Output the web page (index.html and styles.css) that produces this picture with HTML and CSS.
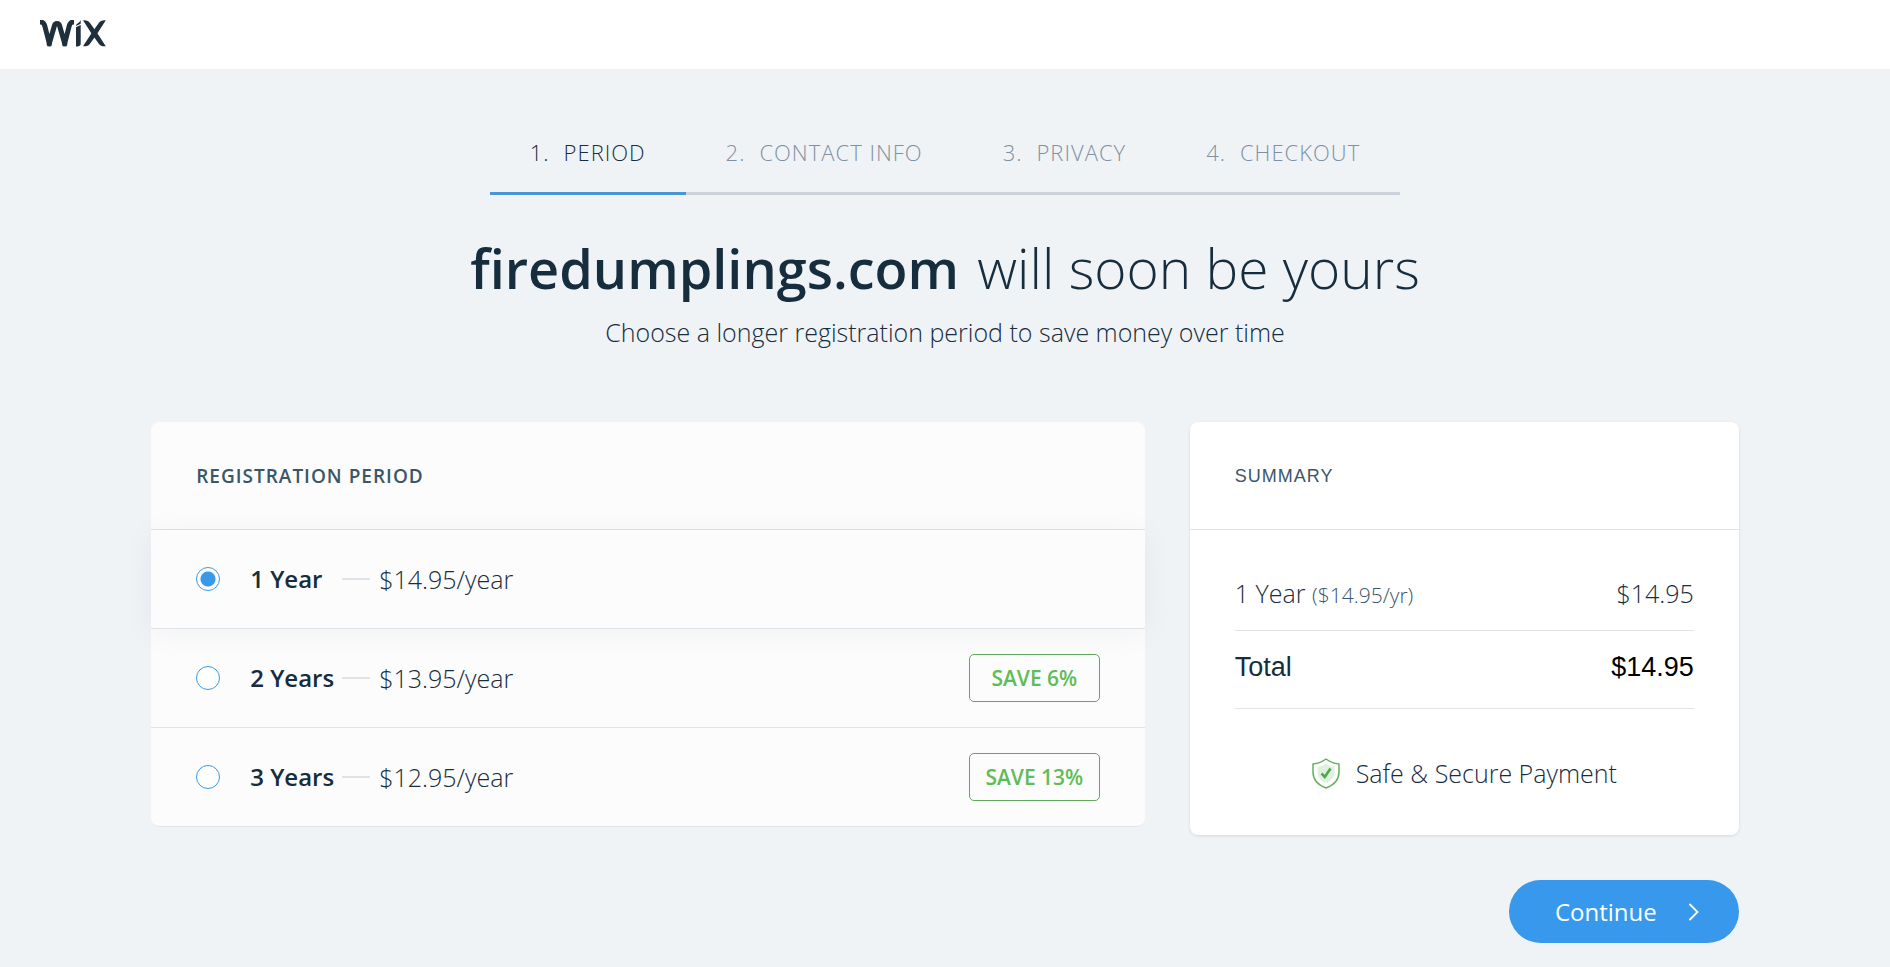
FILE: index.html
```html
<!DOCTYPE html>
<html lang="en">
<head>
    <meta charset="UTF-8">
    <meta name="viewport" content="width=device-width, initial-scale=1.0">
    <title>Registration period</title>
    <link rel="stylesheet" href="styles.css">
</head>
<body>
    <header class="topbar">
        <a href="#" class="logo" aria-label="Wix">
            <svg width="66" height="27" viewBox="0 0 66 27" fill="none" stroke="#1f303c">
                <path d="M0 2C3 2 4 3 4.800 6L9.300 23.500L14.200 6.500C15 2.500 19 2.500 19.800 6.500L24.700 23.500L29.200 6C30 3 31 2 34 2" stroke-width="5" stroke-linejoin="bevel"/>
                <path d="M6.800 23h5v2q0 1.500 -2.500 1.500t-2.500 -1.500zM22.200 23h5v2q0 1.500 -2.500 1.500t-2.500 -1.500z" fill="#1f303c" stroke="none"/>
                <path d="M36 5.500C36.500 3.500 39 3.500 40.700 0V24C40.700 26 38.500 26.500 36 26.500Z" fill="#1f303c" stroke="none"/>
                <path d="M34 7.500L41.500 4" stroke="#fff" stroke-width="1.200"/>
                <path d="M43 0.300C46.500 0 48.500 0.800 50 3L57 12.800L65.800 26.300C62.300 26.600 60.300 25.800 58.800 23.800L51.800 14Z" fill="#1f303c" stroke="none"/>
                <path d="M65.800 0.300C62.300 0 60.300 0.800 58.800 3L51.800 12.800L43 26.300C46.500 26.600 48.500 25.800 50 23.800L57 14Z" fill="#1f303c" stroke="none"/>
            </svg>
        </a>
    </header>

    <main class="container">
        <nav class="steps">
            <a href="#" class="step active" aria-current="step"><span class="num">1.</span>PERIOD</a>
            <a href="#" class="step"><span class="num">2.</span>CONTACT INFO</a>
            <a href="#" class="step"><span class="num">3.</span>PRIVACY</a>
            <a href="#" class="step"><span class="num">4.</span>CHECKOUT</a>
        </nav>

        <h1 class="title"><strong>firedumplings.com</strong> <span>will soon be yours</span></h1>
        <p class="subtitle">Choose a longer registration period to save money over time</p>

        <form class="columns">
            <section class="card periods">
                <h2 class="card-header">REGISTRATION PERIOD</h2>
                <label class="option selected">
                    <input type="radio" name="period" value="1" checked>
                    <span class="years">1 Year</span>
                    <span class="dash"></span>
                    <span class="price">$14.95/year</span>
                </label>
                <label class="option">
                    <input type="radio" name="period" value="2">
                    <span class="years">2 Years</span>
                    <span class="dash"></span>
                    <span class="price">$13.95/year</span>
                    <span class="badge">SAVE 6%</span>
                </label>
                <label class="option">
                    <input type="radio" name="period" value="3">
                    <span class="years">3 Years</span>
                    <span class="dash"></span>
                    <span class="price">$12.95/year</span>
                    <span class="badge">SAVE 13%</span>
                </label>
            </section>

            <div class="side">
                <section class="card summary">
                    <h2 class="card-header">SUMMARY</h2>
                    <div class="summary-body">
                        <div class="line">
                            <span>1 Year <small>($14.95/yr)</small></span>
                            <span>$14.95</span>
                        </div>
                        <div class="line total">
                            <span>Total</span>
                            <span class="amount">$14.95</span>
                        </div>
                        <div class="secure">
                            <svg width="28" height="31" viewBox="0 0 28 31" fill="none">
                                <path d="M14 1C17.500 3.800 22 5.500 27 6V14C27 21 22 27 14 30C6 27 1 21 1 14V6C6 5.500 10.500 3.800 14 1Z" stroke="#60b35c" stroke-width="1.500" stroke-linejoin="round"/>
                                <path d="M14 5.500C17 7.500 19.500 8.500 22.500 9V14C22.500 19 19 23 14 25C9 23 5.500 19 5.500 14V9C8.500 8.500 11 7.500 14 5.500Z" fill="#dff0de"/>
                                <path d="M9.500 15.500L12.800 19L18.500 10.500" stroke="#4caa4a" stroke-width="2.600"/>
                            </svg>
                            Safe &amp; Secure Payment
                        </div>
                    </div>
                </section>
                <button type="button" class="continue">
                    Continue
                    <svg width="10" height="18" viewBox="0 0 10 18" fill="none" stroke="#fff" stroke-width="1.800" stroke-linecap="round">
                        <path d="M1 1.500L8.500 9L1 16.500"/>
                    </svg>
                </button>
            </div>
        </form>
    </main>
</body>
</html>
```

FILE: styles.css
```css
* {
    margin: 0;
    padding: 0;
    box-sizing: border-box;
}

body {
    min-height: 100vh;
    background: #eff3f6;
    color: #162d3d;
    font-family: "Open Sans", sans-serif;
    font-size: 25px;
    font-weight: 300;
    line-height: 32px;
}

.topbar {
    display: flex;
    height: 69px;
    padding: 20px 40px;
    background: #fff;
}

.logo {
    display: block;
    height: 27px;
}

.logo svg {
    display: block;
}

.container {
    padding: 67px 8% 20px;
}

/* steps */
.steps {
    display: flex;
    width: fit-content;
    margin: 0 auto;
}

.step {
    display: flex;
    gap: 14px;
    padding: 0 40px 23px;
    border-bottom: 3px solid #cbd2db;
    color: #7f91a1;
    font-size: 22px;
    letter-spacing: 1px;
    line-height: 33px;
    text-decoration: none;
}

.step.active {
    border-color: #4c95d3;
    color: #162d3d;
}

.title {
    margin-top: 38px;
    font-size: 55px;
    font-weight: 300;
    line-height: 70px;
    text-align: center;
}

.title strong {
    margin-right: 4px;
    font-size: 54px;
    font-weight: 600;
}

.subtitle {
    margin-top: 13px;
    text-align: center;
}

/* cards */
.columns {
    display: grid;
    grid-template-columns: 1.81fr 1fr;
    gap: 45px;
    align-items: start;
    margin-top: 74px;
}

.card {
    border-radius: 8px;
    background: #fff;
    box-shadow: 0 1px 3px rgba(22, 45, 61, 0.12);
}

.card-header {
    padding: 38px 45px 37px;
    border-bottom: 1px solid #dfe3e8;
    color: #3b5668;
    font-size: 18px;
    font-weight: 600;
    letter-spacing: 1px;
}

.periods {
    background: #fcfcfc;
    box-shadow: none;
}

.periods .card-header {
    font-size: 19px;
}

.option {
    display: flex;
    align-items: center;
    height: 99px;
    padding: 0 45px;
    border-bottom: 1px solid #dfe3eb;
    cursor: pointer;
}

.option:last-child {
    border-radius: 0 0 8px 8px;
}

.option.selected {
    box-shadow: 0 4px 30px rgba(22, 45, 61, 0.05);
}

.option input {
    appearance: none;
    width: 24px;
    height: 24px;
    border: 1px solid #3899ec;
    border-radius: 50%;
    background: #fff;
}

.option input:checked {
    background: radial-gradient(circle, #3899ec 7px, #fff 8px);
}

.years {
    width: 92px;
    margin-left: 30px;
    font-size: 24px;
    font-weight: 600;
}

.dash {
    width: 28px;
    height: 2px;
    margin-right: 9px;
    background: #dfe3e8;
}

.badge {
    width: 131px;
    margin-left: auto;
    border: 1px solid #60a85e;
    border-radius: 5px;
    color: #60bc57;
    font-size: 21px;
    font-weight: 600;
    line-height: 46px;
    text-align: center;
}

/* summary */
.summary .card-header {
    font-family: "Liberation Sans", sans-serif;
    font-weight: 400;
}

.summary-body {
    padding: 38px 45px 46px;
}

.line {
    display: flex;
    justify-content: space-between;
    padding: 9px 0 19px;
    border-bottom: 1px solid #dfe3e8;
}

.line small {
    color: #3b5668;
    font-size: 21px;
}

.total {
    padding: 20px 0 25px;
    font-family: "Liberation Sans", sans-serif;
    font-size: 27px;
    font-weight: 400;
}

.amount {
    color: #000;
}

.secure {
    display: flex;
    align-items: center;
    justify-content: center;
    gap: 16px;
    padding-top: 48px;
}

.continue {
    display: flex;
    align-items: center;
    gap: 32px;
    height: 63px;
    margin: 45px 0 0 auto;
    padding: 0 40px 0 46px;
    border: none;
    border-radius: 32px;
    background: #3899ec;
    color: #fff;
    font-family: inherit;
    font-size: 24px;
    font-weight: 400;
    cursor: pointer;
}
```
